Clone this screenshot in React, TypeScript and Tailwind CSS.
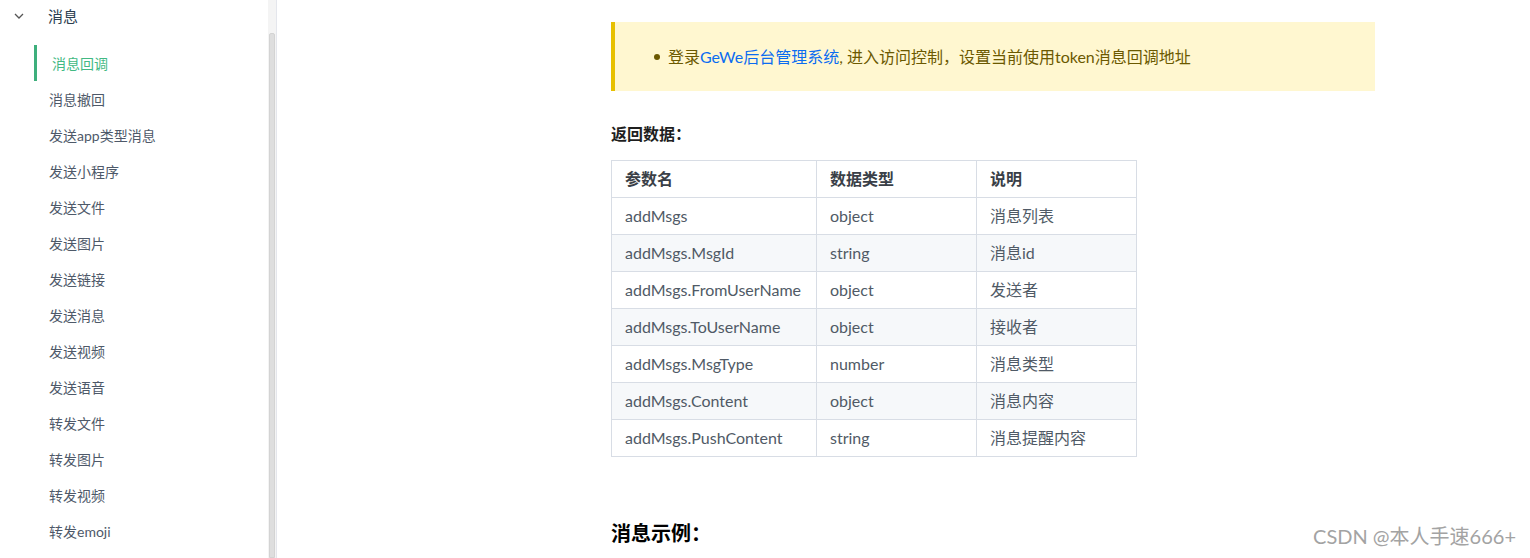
const navItems = [
  "消息撤回",
  "发送app类型消息",
  "发送小程序",
  "发送文件",
  "发送图片",
  "发送链接",
  "发送消息",
  "发送视频",
  "发送语音",
  "转发文件",
  "转发图片",
  "转发视频",
  "转发emoji",
];

const rows = [
  ["addMsgs", "object", "消息列表"],
  ["addMsgs.MsgId", "string", "消息id"],
  ["addMsgs.FromUserName", "object", "发送者"],
  ["addMsgs.ToUserName", "object", "接收者"],
  ["addMsgs.MsgType", "number", "消息类型"],
  ["addMsgs.Content", "object", "消息内容"],
  ["addMsgs.PushContent", "string", "消息提醒内容"],
];

const font = {
  fontFamily: 'Lato, "Noto Sans CJK SC", sans-serif',
};

const Sidebar = () => {
  return (
    <aside className="w-[268px] shrink-0 bg-white">
      <div className="h-[32px] flex items-center">
        <svg
          className="ml-[13px] w-3 h-3 text-[#555]"
          viewBox="0 0 12 12"
          fill="none"
          stroke="currentColor"
          strokeWidth="1.3"
        >
          <path d="M2 4l4 4 4-4" />
        </svg>
        <span className="ml-[23px] text-[15px] text-[#2c3e50]">消息</span>
      </div>
      <ul className="mt-[13px]">
        <li className="ml-[34px] h-[36px] flex items-center border-l-[3px] border-[#3eaf7c] pl-[15px] text-[14px] text-[#42b983]">
          消息回调
        </li>
        {navItems.map((item) => (
          <li
            key={item}
            className="h-[36px] flex items-center pl-[49px] text-[14px] text-[#4e5969]"
          >
            {item}
          </li>
        ))}
      </ul>
    </aside>
  );
};

const Scrollbar = () => {
  return (
    <div className="w-[9px] shrink-0 bg-[#f4f4f4] flex flex-col border-r border-[#e4e6ec]">
      <div className="h-[33px]" />
      <div className="flex-1 mx-[1px] rounded-t-[2px] bg-[#dedede] border border-[#d3d3d3]" />
    </div>
  );
};

const App = () => {
  return (
    <div
      className="relative flex h-[558px] w-[1530px] overflow-hidden bg-white"
      style={font}
    >
      <Sidebar />
      <Scrollbar />
      <main className="flex-1 pl-[334px] pt-[22px]">
        <div className="w-[764px]">
          <div className="h-[69px] flex items-center bg-[#fff7d0] border-l-4 border-[#e7c000] pl-[39px]">
            <span className="w-[6px] h-[6px] rounded-full bg-[#6b5900]" />
            <p className="ml-[8px] text-[16px] text-[#6b5900]">
              登录<span className="text-[#0b6cf0]">GeWe后台管理系统</span>, 进入访问控制，设置当前使用token消息回调地址
            </p>
          </div>
          <h4 className="mt-[32px] text-[16px] font-bold text-[#1f1f1f] leading-[22px]">
            返回数据：
          </h4>
          <table className="mt-[15px] border-collapse text-[16px] text-[#505a66]">
            <thead>
              <tr>
                <th className="w-[205px] h-[37px] border border-[#d8dde5] px-[13px] text-left font-semibold text-[#3a3f47]">
                  参数名
                </th>
                <th className="w-[160px] h-[37px] border border-[#d8dde5] px-[13px] text-left font-semibold text-[#3a3f47]">
                  数据类型
                </th>
                <th className="w-[160px] h-[37px] border border-[#d8dde5] px-[13px] text-left font-semibold text-[#3a3f47]">
                  说明
                </th>
              </tr>
            </thead>
            <tbody>
              {rows.map((r, i) => (
                <tr key={r[0]} className={i % 2 === 1 ? "bg-[#f6f8fa]" : "bg-white"}>
                  {r.map((c) => (
                    <td
                      key={c}
                      className="h-[37px] border border-[#d8dde5] px-[13px] font-normal"
                    >
                      {c}
                    </td>
                  ))}
                </tr>
              ))}
            </tbody>
          </table>
          <h3 className="mt-[61px] text-[20px] font-bold text-black">消息示例：</h3>
        </div>
      </main>
      <div className="absolute right-[14px] bottom-[7px] text-[20px] text-[#a3a3a3]">
        CSDN @本人手速666+
      </div>
    </div>
  );
};

export default App;
